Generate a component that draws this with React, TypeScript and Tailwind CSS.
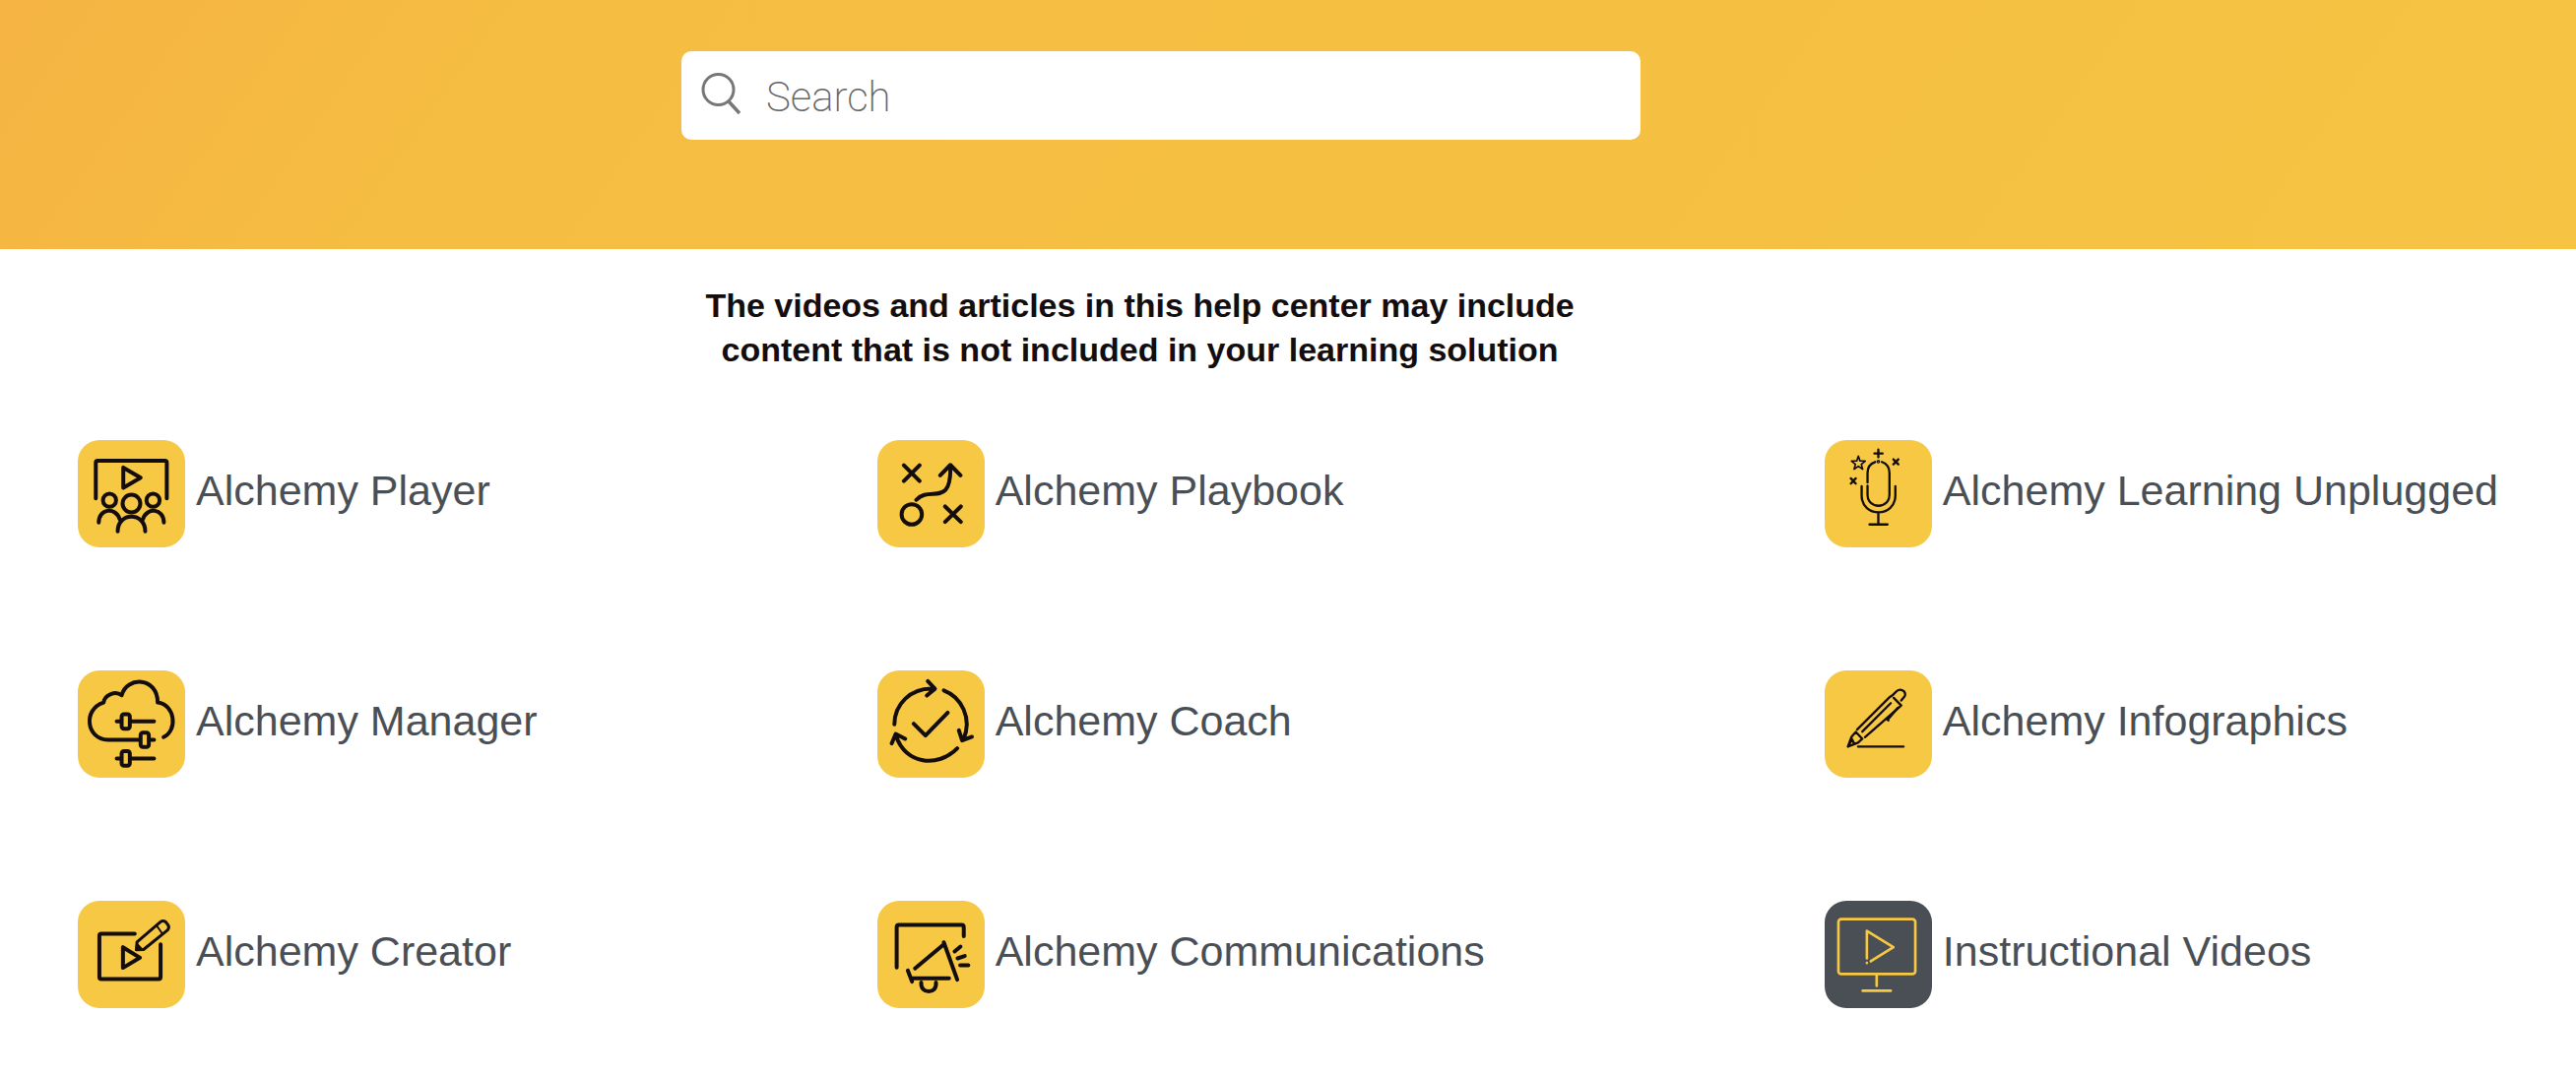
import type { ReactNode } from "react";

type Tile = { label: string; viewBox: string; dark?: boolean; width?: number; art: ReactNode };

const player = (
  <>
    <path d="M81 199V90Q81 84 87 84H292Q298 84 298 90V199" />
    <path d="M165 105V167L218 136Z" />
    <circle cx="123" cy="205" r="20" />
    <circle cx="190" cy="215" r="27" />
    <circle cx="256" cy="205" r="20" />
    <path d="M90 273C90 230 142 224 154 263M289 273C289 230 237 224 225 263" />
    <path d="M148 300C148 240 232 240 232 300" />
  </>
);

const manager = (
  <>
    <path d="M288 235C332 215 324 135 270 129C270 50 175 48 160 107C142 93 108 104 105 129C40 150 52 242 118 243H214M246 243H259" />
    <path d="M145 187H158M188 187H259M145 300H158M188 300H259" />
    <rect x="160" y="165" width="25" height="44" rx="7" />
    <rect x="218" y="221" width="25" height="44" rx="7" />
    <rect x="160" y="278" width="25" height="44" rx="7" />
  </>
);

const creator = (
  <>
    <path d="M199 128H97Q91 128 91 134V260Q91 266 97 266H272Q278 266 278 260V160" />
    <path d="M163 169V232L215 201Z" />
    <path d="M206 153L277 92Q285 86 293 91L301 101Q306 109 299 117L226 176L204 177Z" strokeWidth="9" />
    <path d="M266 103L283 127" strokeWidth="6" />
    <path d="M205 156L223 176L203 178Z" fill="currentColor" strokeWidth="4" />
  </>
);

const playbook = (
  <>
    <path d="M104 98L152 146M152 98L104 146M230 224L278 271M278 224L230 271" />
    <circle cx="128" cy="248" r="31" />
    <path d="M142 204C182 158 250 232 246 99M215 129L246 97L277 129" />
  </>
);

const coach = (
  <>
    <path d="M75 196C75 136 124 82 198 87M177 64L199 87L174 108" />
    <path d="M226 92C279 112 314 176 286 242M272 214L282 245L312 234" />
    <path d="M267 269C208 330 108 318 80 231M67 254L79 225L108 240" />
    <path d="M134 194L170 230L238 160" />
  </>
);

const communications = (
  <>
    <path d="M79 231V108Q79 101 86 101H277Q284 101 284 108V135" />
    <path d="M135 234L223 160M223 154L264 268M113 240L126 274M125 264H239" />
    <path d="M154 277C150 313 204 313 199 277M256 182L274 167M265 203L287 196M273 224H298" />
  </>
);

const unplugged = (
  <>
    <path d="M154 151V122Q154 95 177 88M198 88Q221 96 221 122V188C221 233 154 233 154 188V161" />
    <path d="M136 162V190C136 259 239 259 239 190V162M187 242V278M160 279H215" />
    <path d="M187 50V74M175 62H200M233 80L248 95M248 80L233 95M103 138L118 154M118 138L103 154" />
    <circle cx="187" cy="87" r="2" />
    <path d="M126 70L131 85H147L135 95L139 110L126 101L113 110L117 95L105 85H121Z" strokeWidth="5" />
  </>
);

const infographics = (
  <>
    <path d="M122 212L220 114Q233 106 240 97C254 82 276 96 267 111L257 123M234 115L257 138L146 235" />
    <path d="M138 218L225 131M247 145L215 182M212 179L218 184" />
    <path d="M118 219L138 240L125 252L94 264L105 234ZM105 239L113 254M95 263L104 246" />
    <path d="M125 264H264" />
  </>
);

const videos = (
  <>
    <rect x="65" y="83" width="235" height="168" rx="9" strokeWidth="8" />
    <path d="M152 203V119L233 169L164 212M152 217V217.1M182 254V287M139 302H225" strokeWidth="8" />
  </>
);

const columns: Tile[][] = [
  [
    { label: "Alchemy Player", viewBox: "26 21 328 328", art: player },
    { label: "Alchemy Manager", viewBox: "26 31 328 328", art: manager },
    { label: "Alchemy Creator", viewBox: "25 27 328 328", art: creator },
  ],
  [
    { label: "Alchemy Playbook", viewBox: "23 21 328 328", art: playbook },
    { label: "Alchemy Coach", viewBox: "23 31 328 328", art: coach },
    { label: "Alchemy Communications", viewBox: "20 27 328 328", art: communications },
  ],
  [
    { label: "Alchemy Learning Unplugged", viewBox: "23 21 328 328", width: 7, art: unplugged },
    { label: "Alchemy Infographics", viewBox: "23 31 328 328", width: 7, art: infographics },
    { label: "Instructional Videos", viewBox: "23 27 328 328", dark: true, art: videos },
  ],
];

function TopicLink({ tile }: { tile: Tile }) {
  return (
    <a href="#" className="flex items-center gap-[11px] text-[#4a4f55]">
      <span
        className={
          tile.dark
            ? "size-[109px] shrink-0 rounded-[22px] bg-[#4a4f55] text-[#f6c843]"
            : "size-[109px] shrink-0 rounded-[22px] bg-[#f7c844] text-[#130d0e]"
        }
      >
        <svg
          viewBox={tile.viewBox}
          className="size-full"
          fill="none"
          stroke="currentColor"
          strokeWidth={tile.width ?? 12}
          strokeLinecap="round"
          strokeLinejoin="round"
          aria-hidden="true"
        >
          {tile.art}
        </svg>
      </span>
      <span className="pb-2 text-[43px] leading-[48px] whitespace-nowrap">{tile.label}</span>
    </a>
  );
}

export default function App() {
  return (
    <div className="min-h-screen bg-white font-['Liberation_Sans',Arial,sans-serif]">
      <header className="bg-linear-[125deg] from-[#f5b443] via-[#f5bd42] via-20% to-[#f6c343] pt-[52px] pb-[111px]">
        <form role="search" className="ml-[26.45%] flex h-[90px] w-[37.25%] items-center gap-[26px] rounded-[10px] bg-white px-5">
          <svg viewBox="0 0 40 44" className="mb-1 h-11 w-10 shrink-0" fill="none" stroke="#777777" strokeWidth="3" aria-hidden="true">
            <circle cx="17.5" cy="18" r="15.5" />
            <path d="M28 30L39 42" strokeWidth="3.5" />
          </svg>
          <input
            type="search"
            aria-label="Search"
            placeholder="Search"
            className="min-w-0 flex-1 bg-transparent pt-1 font-['Roboto',sans-serif] text-[42px] leading-[48px] font-extralight text-[#666666] outline-none placeholder:text-[#666666]"
          />
        </form>
      </header>
      <main>
        <p className="pt-[35px] pr-[11.5%] text-center text-[34px] leading-[45px] font-bold text-[#130d0e]">
          The videos and articles in this help center may include
          <br />
          content that is not included in your learning solution
        </p>
        <nav aria-label="Help topics" className="flex justify-between px-[79px] pt-[69px] pb-[70px]">
          {columns.map((tiles) => (
            <div key={tiles[0].label} className="flex flex-col gap-[125px]">
              {tiles.map((tile) => (
                <TopicLink key={tile.label} tile={tile} />
              ))}
            </div>
          ))}
        </nav>
      </main>
    </div>
  );
}
